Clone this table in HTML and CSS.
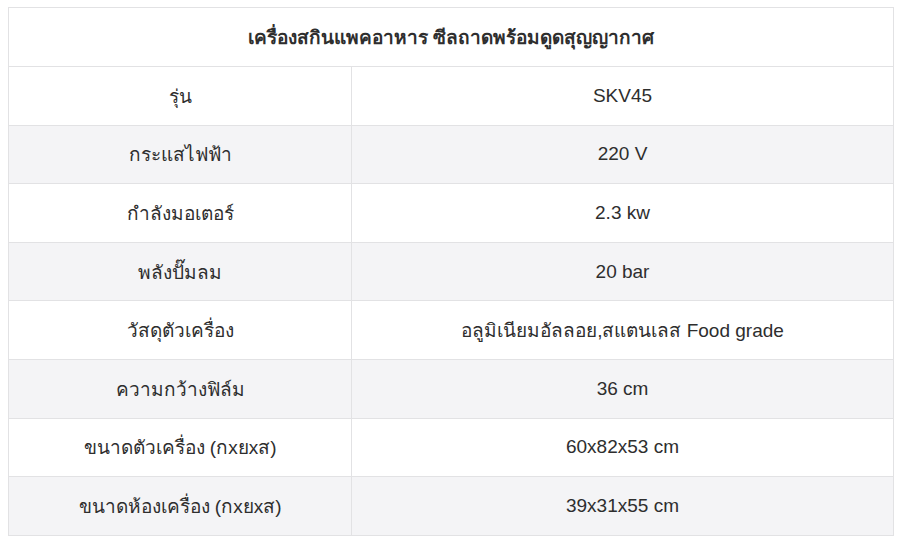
FILE: index.html
```html
<!DOCTYPE html>
<html lang="th">
<head>
<meta charset="utf-8">
<link rel="stylesheet" href="styles.css">
</head>
<body>
<table class="spec">
  <colgroup>
    <col class="col-key">
    <col class="col-val">
  </colgroup>
  <thead>
    <tr><th colspan="2">เครื่องสกินแพคอาหาร ซีลถาดพร้อมดูดสุญญากาศ</th></tr>
  </thead>
  <tbody>
    <tr><td>รุ่น</td><td>SKV45</td></tr>
    <tr><td>กระแสไฟฟ้า</td><td>220 V</td></tr>
    <tr><td>กำลังมอเตอร์</td><td>2.3 kw</td></tr>
    <tr><td>พลังปั๊มลม</td><td>20 bar</td></tr>
    <tr><td>วัสดุตัวเครื่อง</td><td>อลูมิเนียมอัลลอย,สแตนเลส Food grade</td></tr>
    <tr><td>ความกว้างฟิล์ม</td><td>36 cm</td></tr>
    <tr><td>ขนาดตัวเครื่อง (กxยxส)</td><td>60x82x53 cm</td></tr>
    <tr><td>ขนาดห้องเครื่อง (กxยxส)</td><td>39x31x55 cm</td></tr>
  </tbody>
</table>
</body>
</html>
```
FILE: styles.css
```css
html, body {
  background: #ffffff;
}
body {
  margin: 7px 0 0 8px;
  font-family: "Liberation Sans", "DejaVu Sans", sans-serif;
  color: #2e2e2e;
}
.spec {
  width: 886px;
  border-collapse: collapse;
  table-layout: fixed;
  font-size: 19px;
}
.col-key {
  width: 343px;
}
.spec th,
.spec td {
  border: 1px solid #e2e2e4;
  text-align: center;
  vertical-align: middle;
  padding: 0 8px;
  height: 57.6px;
}
.spec th {
  font-weight: bold;
  height: 58px;
}
.spec tbody tr:nth-child(even) td {
  background: #f4f4f6;
}
```
